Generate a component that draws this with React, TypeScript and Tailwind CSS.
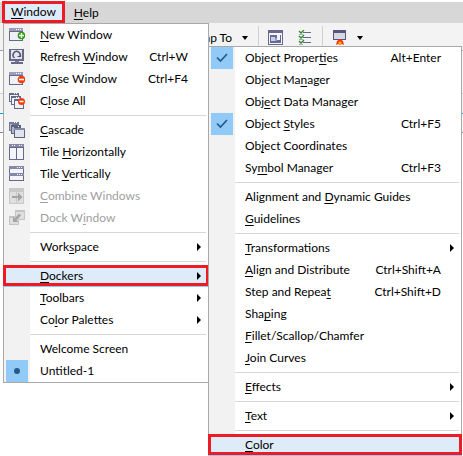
import React from "react";

type Item = {
  label: string;
  keyAt?: number;
  shortcut?: string;
  icon?: React.ReactNode;
  arrow?: boolean;
  mark?: "check" | "dot";
  disabled?: boolean;
  active?: boolean;
};

const Svg = ({ children, dim }: { children: React.ReactNode; dim?: boolean }) => (
  <svg width="16" height="16" viewBox="0 0 16 16" shapeRendering="crispEdges" className={dim ? "opacity-90" : ""} aria-hidden="true">
    {children}
  </svg>
);

const Frame = () => (
  <>
    <path d="M0 1h14v13H0z" fill="#666989" />
    <path d="M1 5h12v8H1z" fill="#f0f1f7" />
    <path d="M0 1h14v3H0z" fill="#9a9cba" />
    <path d="M7 2h1v1H7zM9 2h1v1H9zM11 2h1v1h-1z" fill="#fff" />
  </>
);

const NewIcon = () => (
  <Svg>
    <Frame />
    <g shapeRendering="auto">
      <circle cx="12.500" cy="8.500" r="3.800" fill="#2e9b12" />
      <path d="M10 8.500h5M12.500 6v5" stroke="#fff" strokeWidth="1.400" />
    </g>
  </Svg>
);
const CloseIcon = () => (
  <Svg>
    <Frame />
    <g shapeRendering="auto">
      <circle cx="12.500" cy="8.500" r="3.800" fill="#f33b0b" />
      <path d="M10 8.500h5" stroke="#fff" strokeWidth="1.600" />
    </g>
  </Svg>
);
const RefreshIcon = () => (
  <Svg>
    <path d="M0 0h15v12H0z" fill="#666a88" />
    <path d="M2 1h11v9H2z" fill="#e4e5ef" />
    <path d="M6 12h4v1H6z" fill="#777a99" />
    <path d="M2 13h12v2H2z" fill="#666a88" />
    <g shapeRendering="auto" fill="none" stroke="#4e5270" strokeWidth="1.500">
      <path d="M5.500 8.800A3.500 3.500 0 1 1 10.500 8" />
      <path d="M8.500 7.500h3v-2.500" strokeWidth="1.200" />
    </g>
  </Svg>
);
const CascadeIcon = () => (
  <Svg>
    <path d="M0 0h10v9H0z" fill="#777a99" />
    <path d="M1 2h2v6H1z" fill="#b4b7cc" />
    <path d="M2 3h10v9H2z" fill="#5d617f" />
    <path d="M3 5h2v6H3z" fill="#b4b7cc" />
    <path d="M5 6h11v10H5z" fill="#5d617f" />
    <path d="M6 8h9v7H6z" fill="#dfe3ee" />
    <path d="M5 6h11v2H5z" fill="#8689a8" />
    <path d="M5 0h1v1H5zM7 0h1v1H7zM9 4h1v1H9z" fill="#fff" />
  </Svg>
);
const CloseAllIcon = () => (
  <Svg>
    <path d="M0 0h10v9H0z" fill="#666989" />
    <path d="M1 2h8v6H1z" fill="#f0f1f7" />
    <path d="M2 3h10v9H2z" fill="#666989" />
    <path d="M3 5h8v6H3z" fill="#f0f1f7" />
    <path d="M5 6h10v10H5z" fill="#666989" />
    <path d="M6 8h8v7H6z" fill="#f0f1f7" />
    <path d="M5 0h1v1H5zM7 0h1v1H7zM7 4h1v1H7zM9 4h1v1H9z" fill="#fff" />
    <g shapeRendering="auto">
      <circle cx="12.500" cy="8.500" r="3.500" fill="#f33b0b" />
      <path d="M10.500 8.500h4" stroke="#fff" strokeWidth="1.500" />
    </g>
  </Svg>
);
const TileHIcon = () => (
  <Svg>
    <path d="M0 0h15v16H0z" fill="#666989" />
    <path d="M1 4h6v11H1zM8 4h6v11H8z" fill="#f4f5fa" />
    <path d="M0 0h15v3H0z" fill="#8588a9" />
    <path d="M3 1h1v1H3zM5 1h1v1H5zM10 1h1v1h-1zM12 1h1v1h-1z" fill="#fff" />
  </Svg>
);
const TileVIcon = () => (
  <Svg>
    <path d="M0 0h15v15H0z" fill="#666989" />
    <path d="M1 3h13v4H1zM1 10h13v4H1z" fill="#f4f5fa" />
    <path d="M0 0h15v3H0zM0 7h15v3H0z" fill="#8588a9" />
    <path d="M8 1h1v1H8zM10 1h1v1h-1zM12 1h1v1h-1zM8 8h1v1H8zM10 8h1v1h-1zM12 8h1v1h-1z" fill="#fff" />
  </Svg>
);
const CombineIcon = () => (
  <Svg dim>
    <path d="M0 0h15v16H0z" fill="#c4c4c4" />
    <path d="M1 4h6v11H1zM8 4h6v11H8z" fill="#dedede" />
    <path d="M3 8h6V4.500L13.500 9 9 13.500V10H3z" fill="#9c9c9c" shapeRendering="auto" />
  </Svg>
);
const DockIcon = () => (
  <Svg dim>
    <path d="M6 0h10v10H6z" fill="#c0c0c0" />
    <path d="M7 2h8v7H7z" fill="#dedede" />
    <path d="M0 6h10v9H0z" fill="#c0c0c0" />
    <path d="M1 8h8v6H1z" fill="#dedede" />
    <path d="M10 3.500l2 2-4.500 4.500 2 2H4V6.500l2 2z" fill="#9c9c9c" shapeRendering="auto" />
  </Svg>
);

const OptionsIcon = () => (
  <Svg>
    <path d="M0 0h15v15H0z" fill="#666989" />
    <path d="M1 3h13v11H1z" fill="#f4f5fa" />
    <path d="M2 5h11v8H2z" fill="#666a98" />
    <path d="M3 7h4v4H3z" fill="#c9cde4" />
    <path d="M9 5h3v5H9z" fill="#f4f5fa" />
    <path d="M7 8h2v3H7z" fill="#9ca0c6" />
  </Svg>
);
const ChecklistIcon = () => (
  <Svg>
    <path d="M5 2h8v1H5zM5 7h8v1H5zM5 12h8v1H5z" fill="#666989" />
    <path d="M1 4h4v1H1zM1 9h4v1H1zM1 14h4v1H1z" fill="#a7a9bd" />
    <path d="M1 1l2 2 3-3M1 6l2 2 3-3M1 11l2 2 3-3" fill="none" stroke="#2c8a1e" strokeWidth="1.300" shapeRendering="auto" />
  </Svg>
);
const LaunchIcon = () => (
  <Svg>
    <path d="M0 0h13v10H0z" fill="#55587a" />
    <path d="M1 3h11v6H1z" fill="#d6d8e6" />
    <path d="M3 15l1-4 3-2 3 2 1 4-2-1-2 1-2-1z" fill="#f0330f" shapeRendering="auto" />
    <path d="M5 13l2-2 2 2-2 2z" fill="#ffb000" shapeRendering="auto" />
  </Svg>
);

const windowMenu: Item[][] = [
  [
    { label: "New Window", keyAt: 0, icon: <NewIcon /> },
    { label: "Refresh Window", keyAt: 8, shortcut: "Ctrl+W", icon: <RefreshIcon /> },
    { label: "Close Window", keyAt: 2, shortcut: "Ctrl+F4", icon: <CloseIcon /> },
    { label: "Close All", keyAt: 1, icon: <CloseAllIcon /> },
  ],
  [
    { label: "Cascade", keyAt: 0, icon: <CascadeIcon /> },
    { label: "Tile Horizontally", keyAt: 5, icon: <TileHIcon /> },
    { label: "Tile Vertically", keyAt: 5, icon: <TileVIcon /> },
    { label: "Combine Windows", keyAt: 0, icon: <CombineIcon />, disabled: true },
    { label: "Dock Window", keyAt: 6, icon: <DockIcon />, disabled: true },
  ],
  [{ label: "Workspace", keyAt: 4, arrow: true }],
  [
    { label: "Dockers", keyAt: 0, arrow: true, active: true },
    { label: "Toolbars", keyAt: 0, arrow: true },
    { label: "Color Palettes", keyAt: 2, arrow: true },
  ],
  [{ label: "Welcome Screen" }, { label: "Untitled-1", mark: "dot" }],
];

const dockersMenu: Item[][] = [
  [
    { label: "Object Properties", keyAt: 13, shortcut: "Alt+Enter", mark: "check" },
    { label: "Object Manager", keyAt: 9 },
    { label: "Object Data Manager", keyAt: 3 },
    { label: "Object Styles", keyAt: 7, shortcut: "Ctrl+F5", mark: "check" },
    { label: "Object Coordinates", keyAt: 2 },
    { label: "Symbol Manager", keyAt: 2, shortcut: "Ctrl+F3" },
  ],
  [
    { label: "Alignment and Dynamic Guides", keyAt: 14 },
    { label: "Guidelines", keyAt: 0 },
  ],
  [
    { label: "Transformations", keyAt: 0, arrow: true },
    { label: "Align and Distribute", keyAt: 0, shortcut: "Ctrl+Shift+A" },
    { label: "Step and Repeat", keyAt: 14, shortcut: "Ctrl+Shift+D" },
    { label: "Shaping", keyAt: 3 },
    { label: "Fillet/Scallop/Chamfer", keyAt: 0 },
    { label: "Join Curves", keyAt: 0 },
  ],
  [{ label: "Effects", keyAt: 0, arrow: true }],
  [{ label: "Text", keyAt: 0, arrow: true }],
  [{ label: "Color", keyAt: 0, active: true }],
];

function Label({ text, keyAt }: { text: string; keyAt?: number }) {
  if (keyAt === undefined) return <span>{text}</span>;
  return (
    <span>
      {text.slice(0, keyAt)}
      <span className="underline underline-offset-2">{text[keyAt]}</span>
      {text.slice(keyAt + 1)}
    </span>
  );
}

function MenuRow({ item }: { item: Item }) {
  return (
    <button
      type="button"
      role="menuitem"
      disabled={item.disabled}
      className={`relative flex h-[22px] w-full items-center whitespace-nowrap text-left ${
        item.disabled ? "text-[#a0a0a0]" : "text-black"
      } ${item.active ? "bg-[#deecf9]" : ""}`}
    >
      <span className="flex h-full w-[26px] shrink-0 items-center justify-center">
        {item.icon}
        {item.mark && (
          <span className="flex size-[22px] items-center justify-center bg-[#91c9f7]">
            {item.mark === "check" ? (
              <svg width="12" height="12" viewBox="0 0 12 12" fill="none" stroke="#235a8c" strokeWidth="1.700" aria-hidden="true">
                <path d="M1 5.500 4.500 9 11 2" />
              </svg>
            ) : (
              <span className="size-[6px] rounded-full bg-[#235a8c]" />
            )}
          </span>
        )}
      </span>
      <span className="flex-1 pl-[10px]">
        <Label text={item.label} keyAt={item.keyAt} />
      </span>
      {item.shortcut && <span className="pr-[20px]">{item.shortcut}</span>}
      {item.arrow && (
        <svg width="4" height="8" viewBox="0 0 4 8" className="mr-[7px]" aria-hidden="true">
          <path d="M0 0 4 4 0 8z" fill="#000" />
        </svg>
      )}
      {item.active && (
        <span className="absolute -inset-x-px inset-y-0 border-b border-[#90c8f6]">
          <span className="block h-full border-[3px] border-[#ed1c24]" />
        </span>
      )}
    </button>
  );
}

function Menu({ groups, label }: { groups: Item[][]; label: string }) {
  return (
    <div role="menu" aria-label={label} className="border border-[#a9a9a9] bg-linear-to-r from-[#f2f2f2] from-[26px] to-white to-[26px]">
      {groups.map((group, i) => (
        <React.Fragment key={i}>
          {i > 0 && <hr className="my-[3px] mr-[2px] ml-[26px] border-[#d7d7d7]" />}
          {group.map((item) => (
            <MenuRow key={item.label} item={item} />
          ))}
        </React.Fragment>
      ))}
    </div>
  );
}

const Caret = () => (
  <svg width="6" height="4" viewBox="0 0 6 4" aria-hidden="true">
    <path d="M0 0h6L3 4z" fill="#000" />
  </svg>
);

export default function App() {
  return (
    <div className="relative min-h-screen overflow-hidden bg-white pt-[2px] font-[Lato,'Open_Sans',sans-serif] text-[12px] leading-[16px] text-black">
      <nav className="flex h-[21px] items-stretch bg-[#d7d7d7] pl-[2px]">
        <button type="button" className="-mt-px border-[3px] border-[#ed1c24] bg-[#deecf9] px-[6px]">
          <Label text="Window" keyAt={0} />
        </button>
        <button type="button" className="px-[9px]">
          <Label text="Help" keyAt={0} />
        </button>
      </nav>
      <div className="flex h-[28px] items-center border-b border-[#a0a0a0] bg-[#f3f3f3] pt-[2px]">
        <button type="button" className="flex w-[248px] items-center justify-end gap-[10px]">
          Snap To <Caret />
        </button>
        <div className="ml-[10px] flex h-[24px] items-center gap-[14px] border-x border-[#d0d0d0] pr-[8px] pl-[9px]">
          <button type="button" aria-label="Options">
            <OptionsIcon />
          </button>
          <button type="button" aria-label="Object styles">
            <ChecklistIcon />
          </button>
        </div>
        <button type="button" aria-label="Launch" className="flex items-center gap-[8px] pl-[10px]">
          <LaunchIcon />
          <Caret />
        </button>
      </div>
      <div className="h-[43px] border-b border-[#d0d0d0] bg-[#f8f8f8]" />
      <div className="h-[20px] border-b border-[#009ddc] bg-[#f3f3f3]" />
      <div className="h-[19px] border-b border-[#888888] bg-[#f8f8f8]" />

      <div className="absolute top-[23px] left-[3px] w-[206px]">
        <Menu groups={windowMenu} label="Window" />
      </div>
      <div className="absolute top-[46px] right-px left-[208px]">
        <Menu groups={dockersMenu} label="Dockers" />
      </div>
    </div>
  );
}
